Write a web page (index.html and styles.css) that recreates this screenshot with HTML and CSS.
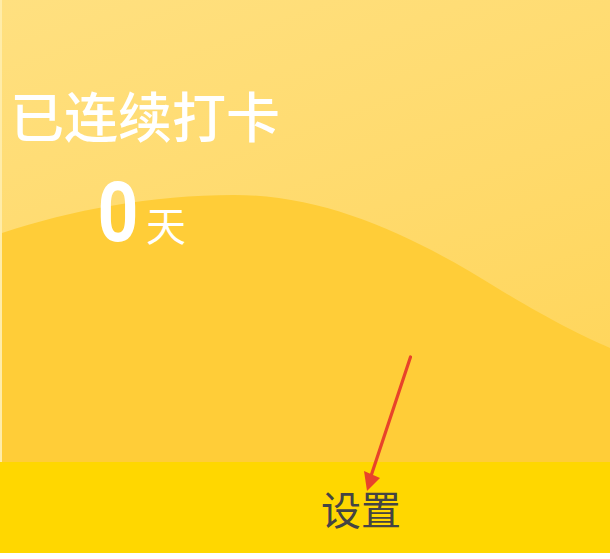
FILE: index.html
```html
<!DOCTYPE html>
<html lang="zh">
<head>
<meta charset="utf-8">
<link rel="stylesheet" href="styles.css">
</head>
<body>
<div class="page">
  <section class="card">
    <svg class="wave" viewBox="0 0 610 462" preserveAspectRatio="none" aria-hidden="true">
      <path d="M0,233 C70,210 150,195 233,195 C330,195 420,240 500,290 C550,320 580,335 610,348 L610,462 L0,462 Z" fill="#FFCD38"/>
    </svg>
    <div class="streak">
      <div class="title">已连续打卡</div>
      <div class="count"><span class="num">0</span><span class="unit">天</span></div>
    </div>
  </section>
  <nav class="bar">
    <span class="tab">设置</span>
  </nav>
  <svg class="arrow" viewBox="0 0 610 559" aria-hidden="true">
    <line x1="410.5" y1="357" x2="369" y2="482" stroke="#E8432A" stroke-width="3.2" stroke-linecap="round"/>
    <polygon points="364,471 380,478 367,491" fill="#E8432A"/>
  </svg>
</div>
</body>
</html>
```

FILE: styles.css
```css
html, body {
  margin: 0;
  padding: 0;
  background: #ffffff;
}

.page {
  position: relative;
  width: 610px;
  height: 559px;
  font-family: "Noto Sans CJK SC", "Noto Sans", sans-serif;
}

.card {
  position: relative;
  height: 462px;
  background: linear-gradient(160deg, #FFE080 0%, #FFDA6C 50%, #FFD455 100%);
  border-left: 2px solid #FFECA8;
  box-sizing: border-box;
  overflow: hidden;
}

.wave {
  position: absolute;
  left: 0;
  top: 0;
  width: 100%;
  height: 100%;
}

.streak {
  position: relative;
  display: inline-flex;
  flex-direction: column;
  align-items: center;
  padding: 76px 0 0 8px;
}

.title {
  color: #ffffff;
  font-size: 54px;
  font-weight: 500;
  line-height: 78px;
}

.count {
  display: flex;
  align-items: baseline;
  color: #ffffff;
  margin-top: 17px;
  margin-left: -10px;
  line-height: 84px;
}

.num {
  display: inline-block;
  font-family: "Roboto", "Liberation Sans", sans-serif;
  font-weight: 700;
  font-size: 84px;
  transform: scaleX(0.85);
}

.unit {
  font-size: 40px;
  margin-left: 4px;
}

.bar {
  height: 91px;
  background: #FFD700;
  display: flex;
  align-items: center;
  padding-left: 321px;
}

.tab {
  font-size: 40px;
  line-height: 1;
  color: #444444;
}

.arrow {
  position: absolute;
  left: 0;
  top: 0;
  width: 610px;
  height: 559px;
  pointer-events: none;
}
```
